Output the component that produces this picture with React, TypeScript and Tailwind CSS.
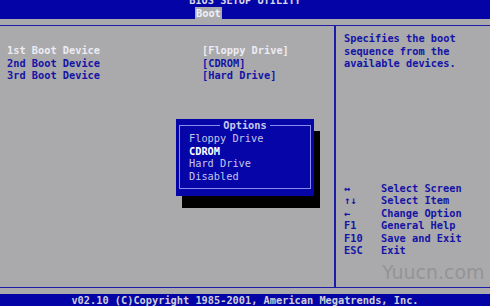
import React from 'react';

const rows = [
  { label: '1st Boot Device', value: '[Floppy Drive]', active: true },
  { label: '2nd Boot Device', value: '[CDROM]', active: false },
  { label: '3rd Boot Device', value: '[Hard Drive]', active: false },
];

const keys = [
  ['↔', 'Select Screen'],
  ['↑↓', 'Select Item'],
  ['←', 'Change Option'],
  ['F1', 'General Help'],
  ['F10', 'Save and Exit'],
  ['ESC', 'Exit'],
];

const options = ['Floppy Drive', 'CDROM', 'Hard Drive', 'Disabled'];

export default function App() {
  return (
    <div className="relative flex h-[306px] w-[490px] flex-col overflow-hidden bg-[#aaa9ab] font-['DejaVu_Sans_Mono',monospace] text-[10.3px] font-bold leading-[12.5px] text-[#1414a6]">
      {/* header */}
      <div className="flex h-[19px] flex-col bg-[#0404a6] text-[#d8d8e8]">
        <div className="-mt-[6px] h-[13px] text-center">BIOS SETUP UTILITY</div>
        <div className="pl-[195px]">
          <span className="inline-block h-[12px] bg-[#aaa9ab] px-[1px] text-[#f0f0f8]">Boot</span>
        </div>
      </div>

      <div className="mt-[6px] flex flex-1 border-y-[1.5px] border-[#1c1ca8]">
        {/* left panel */}
        <div className="relative w-[336px] border-r-2 border-[#1c1ca8] pl-[7px] pt-[18px]">
          {rows.map((r) => (
            <div
              key={r.label}
              className={`flex ${r.active ? 'text-[#ececf4]' : 'text-[#1414a6]'}`}
            >
              <span className="w-[195px]">{r.label}</span>
              <span>{r.value}</span>
            </div>
          ))}

          {/* options popup */}
          <div className="absolute left-[176px] top-[93px] h-[77px] w-[138px] bg-[#0606a8] shadow-[6px_12px_0_0_#000]">
            <div className="absolute inset-x-[3px] bottom-[7px] top-[6px] border border-[#8c8cf0]" />
            <div className="relative flex h-[12px] justify-center">
              <span className="bg-[#0606a8] px-[3px] text-[#c8c8ec]">Options</span>
            </div>
            <div className="relative pl-[13px] pt-[1px]">
              {options.map((o) => (
                <div
                  key={o}
                  className={o === 'CDROM' ? 'text-white' : 'font-normal text-[#c4c4e8]'}
                >
                  {o}
                </div>
              ))}
            </div>
          </div>
        </div>

        {/* right panel */}
        <div className="flex flex-1 flex-col pl-[8px] pt-[6px]">
          <div>Specifies the boot</div>
          <div>sequence from the</div>
          <div>available devices.</div>
          <div className="mt-[112px] flex flex-col">
            {keys.map(([k, d]) => (
              <div key={k} className="flex">
                <span className="w-[37px]">{k}</span>
                <span>{d}</span>
              </div>
            ))}
          </div>
        </div>
      </div>

      <div className="mt-[6px] h-[12px] bg-[#0404a6] text-center text-[#d0d0d8]">
        v02.10 (C)Copyright 1985-2001, American Megatrends, Inc.
      </div>

      {/* watermark */}
      <div className="absolute left-[382px] top-[261px] font-['DejaVu_Sans',sans-serif] text-[19px] font-normal leading-[22px] text-[#8a8a8a]/70">
        Yuucn.com
      </div>
    </div>
  );
}
